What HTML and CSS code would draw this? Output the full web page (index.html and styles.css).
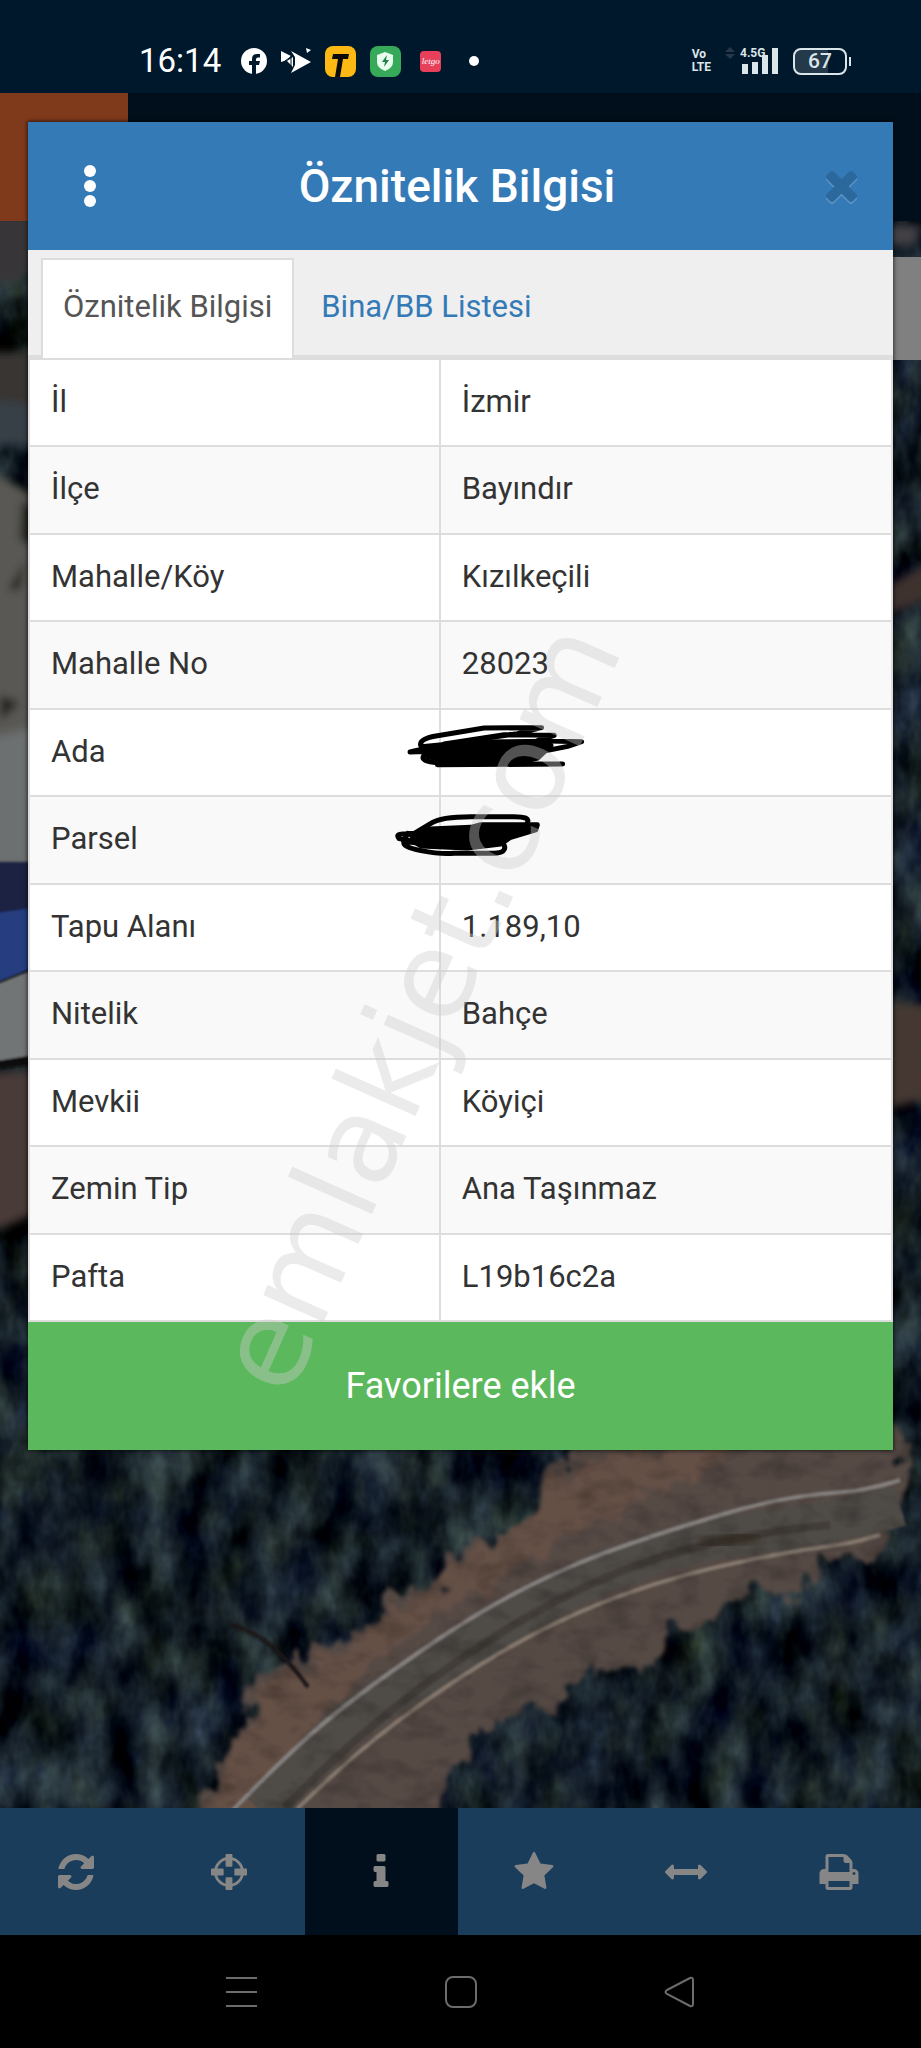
FILE: index.html
```html
<!DOCTYPE html>
<html lang="tr">
<head>
  <meta charset="UTF-8">
  <meta name="viewport" content="width=device-width, initial-scale=1.0">
  <title>Öznitelik Bilgisi</title>
  <link rel="stylesheet" href="styles.css">
</head>
<body>
  <!-- Phone status bar -->
  <div class="status-bar">
    <div class="status-left">
      <span class="clock">16:14</span>
      <svg width="26" height="26" viewBox="0 0 26 26"><circle cx="13" cy="13" r="13" fill="#fff"/><path d="M11 26v-9H8v-4h3v-2q0-5 5-5h3v3.500h-2q-2 0-2 2V13h4l-1 4h-3v9z" fill="#00182b"/></svg>
      <svg width="30" height="26" viewBox="0 0 30 26"><path d="M0 3l10 5-4 4-6 2zM10 3l20 11-20 11 4-8V9zM25 0l5 2-4 3zM6 13l6-4v10z" fill="#fff"/><path d="M10 8v11M4 13l7-5" stroke="#00182b" stroke-width="1"/></svg>
      <svg width="31" height="31" viewBox="0 0 31 31"><rect width="31" height="31" rx="8" fill="#fdb913"/><path d="M8 8h16l-1 5h-5l-3 18h-5l3-18H7z" fill="#0b0b0b"/></svg>
      <svg width="31" height="31" viewBox="0 0 31 31"><rect width="31" height="31" rx="8" fill="#37aa5a"/><path d="M15 6l8 3v7q0 6-8 9-8-3-8-9V9z" fill="#e8fff0"/><path d="M17 9l-5 7h3l-1 5 5-7h-3z" fill="#23804a"/></svg>
      <span class="letgo">letgo</span>
      <span class="dot"></span>
    </div>
    <div class="status-right">
      <span class="volte">Vo<br>LTE</span>
      <svg class="data-arrows" width="10" height="12" viewBox="0 0 10 12"><path d="M0 5l5-5 5 5zM0 7h10l-5 5z" fill="#26384a"/></svg>
      <span class="signal">
        <span class="network">4.5G</span>
        <svg width="38" height="26" viewBox="0 0 38 26"><path d="M1 16h6v10H1zM11 14h6v12h-6zM21 7h6v19h-6zM31 0h6v26h-6z" fill="#dbe6ea"/></svg>
      </span>
      <span class="battery">67</span>
    </div>
  </div>

  <header class="app-header"><div class="app-logo"></div></header>

  <main class="map">
    <svg class="map-image" viewBox="0 221 921 1587" preserveAspectRatio="xMidYMid slice">
      <defs>
        <filter id="forest" x="0" y="0" width="100%" height="100%" color-interpolation-filters="sRGB">
          <feTurbulence type="fractalNoise" baseFrequency="0.028 0.016" numOctaves="4" seed="8"/>
          <feColorMatrix values="0.420 0.080 0 0 -0.170  0.500 0.080 0 0 -0.170  0.460 0 0.120 0 -0.140  0 0 0 0 1"/>
        </filter>
        <filter id="ground" x="0" y="0" width="100%" height="100%" color-interpolation-filters="sRGB">
          <feTurbulence type="fractalNoise" baseFrequency="0.030 0.050" numOctaves="3" seed="3"/>
          <feColorMatrix values="0 0 0 0 0  0 0 0 0 0  0 0 0 0 0  1.600 0 0 0 -0.700"/>
        </filter>
        <filter id="rough" color-interpolation-filters="sRGB">
          <feTurbulence type="fractalNoise" baseFrequency="0.050 0.030" numOctaves="3" seed="5" result="n"/>
          <feDisplacementMap in="SourceGraphic" in2="n" scale="44" xChannelSelector="R" yChannelSelector="G"/>
          <feGaussianBlur stdDeviation="2"/>
        </filter>
        <filter id="soft"><feGaussianBlur stdDeviation="1"/></filter>
        <filter id="softer"><feGaussianBlur stdDeviation="4"/></filter>
      </defs>
      <rect y="221" width="921" height="1587" filter="url(#forest)"/>

      <!-- left edge: rocks, car and path -->
      <g filter="url(#softer)">
        <path d="M-10 215h50v45l-22 20-28 5z" fill="#383637"/>
        <path d="M-10 352h50v90h-50z" fill="#373533"/>
        <path d="M-10 400l50 5v40h-50z" fill="#374146"/>
        <path d="M-10 470l50 30v380h-50z" fill="#5a5954"/>
        <path d="M22 500l18 10v40l-20-10zM0 695l20 8-20 18zM8 590l18-30-6 30z" fill="#24211b"/>
        <path d="M-10 738l50-12v140h-50z" fill="#6c6f6f"/>
        <path d="M-10 1072h50v140l-50 20z" fill="#493a39"/>
      </g>
      <g filter="url(#soft)">
        <path d="M-10 862h50v56h-50z" fill="#1d2442"/>
        <path d="M-10 914l50-7v58l-50 20z" fill="#263d80"/>
        <path d="M-10 987l50-20v88l-50 8z" fill="#727476"/>
        <path d="M-10 1062l50-8v10l-50 6z" fill="#0a0a0c"/>
      </g>
      <!-- right edge -->
      <g filter="url(#softer)">
        <path d="M880 225h41l-6 20h-35z" fill="#424044"/>
        <path d="M880 590l50-28v36l-50 20z" fill="#3c302e"/>
        <path d="M880 1000l50 6v92l-50 12z" fill="#443731"/>
      </g>

      <!-- verge and road -->
      <g filter="url(#rough)">
        <path d="M185 1820l55-90 15-50 65-35 55-20 10-30 65-15 10-35 55-15 30-30 25-70h330l5 60-15 60-70 10-20 40-50-10-30 30-50 10-20 40-60 0-30 35-55 15-40 20-20 50-15 80z" fill="#564a45"/>
        <path d="M200 1820l55-120 130-80 150-110 70-60h140l-190 90-180 120-130 170z" fill="#655046"/>
      </g>
      <g filter="url(#soft)" fill="none">
        <path d="M263 1812Q330 1733 385 1698T540 1605T740 1535T900 1505" stroke="#504b47" stroke-width="43"/>
        <path d="M285 1808Q360 1729 455 1663T635 1566T830 1525" stroke="#423d39" stroke-width="8"/>
        <path d="M233 1810C300 1740 340 1705 440 1638S620 1545 720 1515S840 1500 900 1480" stroke="#85817f" stroke-width="4"/>
        <path d="M296 1810C350 1757 400 1715 480 1665S640 1583 740 1562S830 1550 880 1535" stroke="#85796e" stroke-width="4"/>
        <path d="M230 1625q40 8 78 62" stroke="#1d1718" stroke-width="4"/>
      </g>
      <path d="M700 1545l60-10" stroke="#302924" stroke-width="10" filter="url(#softer)"/>
      <rect x="0" y="1440" width="921" height="370" filter="url(#ground)" opacity="0.300"/>
    </svg>
    <div class="map-control"></div>
  </main>

  <nav class="toolbar">
    <button type="button" aria-label="Yenile"><svg viewBox="0 0 1792 1792"><path d="M1639 1056q0 5-1 7-64 268-268 434.500t-478 166.500q-146 0-282.500-55t-243.500-157l-129 129q-19 19-45 19t-45-19-19-45v-448q0-26 19-45t45-19h448q26 0 45 19t19 45-19 45l-137 137q71 66 161 102t187 36q134 0 250-65t186-179q11-17 53-117 8-23 30-23h192q13 0 22.500 9.500t9.500 22.500zm25-800v448q0 26-19 45t-45 19h-448q-26 0-45-19t-19-45 19-45l138-138q-148-137-349-137-134 0-250 65t-186 179q-11 17-53 117-8 23-30 23h-199q-13 0-22.500-9.500t-9.500-22.500v-7q65-268 270-434.500t480-166.500q146 0 284 55.500t245 156.500l130-129q19-19 45-19t45 19 19 45z"/></svg></button>
    <button type="button" aria-label="Konum"><svg viewBox="0 0 1792 1792"><circle cx="896" cy="896" r="580" fill="none" stroke="#868686" stroke-width="120"/><path d="M790 128h212q40 0 40 40v460q0 40-40 40H790q-40 0-40-40V168q0-40 40-40zM790 1124h212q40 0 40 40v460q0 40-40 40H790q-40 0-40-40v-460q0-40 40-40zM168 750h460q40 0 40 40v212q0 40-40 40H168q-40 0-40-40V790q0-40 40-40zM1164 750h460q40 0 40 40v212q0 40-40 40h-460q-40 0-40-40V790q0-40 40-40z"/></svg></button>
    <button type="button" class="active" aria-label="Bilgi"><svg viewBox="0 0 1792 1792"><path d="M1216 1344v128q0 26-19 45t-45 19h-512q-26 0-45-19t-19-45v-128q0-26 19-45t45-19h64v-384h-64q-26 0-45-19t-19-45v-128q0-26 19-45t45-19h384q26 0 45 19t19 45v576h64q26 0 45 19t19 45zm-128-1152v192q0 26-19 45t-45 19h-256q-26 0-45-19t-19-45v-192q0-26 19-45t45-19h256q26 0 45 19t19 45z"/></svg></button>
    <button type="button" aria-label="Favoriler"><svg viewBox="0 0 1792 1792"><path d="M1728 647q0 22-26 48l-363 354 86 500q1 7 1 20 0 21-10.500 35.500t-30.500 14.500q-19 0-40-12l-449-236-449 236q-22 12-40 12-21 0-31.500-14.500t-10.500-35.500q0-6 2-20l86-500-364-354q-25-27-25-48 0-37 56-46l502-73 225-455q19-41 49-41t49 41l225 455 502 73q56 9 56 46z"/></svg></button>
    <button type="button" aria-label="Ölçüm"><svg viewBox="0 0 1792 1792"><path d="M1792 896q0 26-19 45l-256 256q-19 19-45 19t-45-19-19-45v-128h-1024v128q0 26-19 45t-45 19-45-19l-256-256q-19-19-19-45t19-45l256-256q19-19 45-19t45 19 19 45v128h1024v-128q0-26 19-45t45-19 45 19l256 256q19 19 19 45z"/></svg></button>
    <button type="button" aria-label="Yazdır"><svg viewBox="0 0 1792 1792"><path d="M448 1536h896v-256h-896v256zm0-640h896v-384h-160q-40 0-68-28t-28-68v-160h-640v640zm1152 64q0-26-19-45t-45-19-45 19-19 45 19 45 45 19 45-19 19-45zm128 0v416q0 13-9.500 22.500t-22.500 9.500h-224v160q0 40-28 68t-68 28h-960q-40 0-68-28t-28-68v-160h-224q-13 0-22.500-9.500t-9.500-22.500v-416q0-79 56.500-135.500t135.500-56.500h64v-544q0-40 28-68t68-28h672q40 0 88 20t76 48l152 152q28 28 48 76t20 88v256h64q79 0 135.500 56.500t56.500 135.500z"/></svg></button>
  </nav>

  <nav class="phone-nav">
    <button type="button" aria-label="Son uygulamalar"><svg viewBox="0 0 32 32"><path d="M1 2h31M1 16h31M1 30h31"/></svg></button>
    <button type="button" aria-label="Ana ekran"><svg viewBox="0 0 32 32"><rect x="1" y="1" width="30" height="30" rx="7"/></svg></button>
    <button type="button" aria-label="Geri"><svg viewBox="0 0 32 32"><path d="M3 14L26 2q3-1 3 2v24q0 3-3 2L3 18q-3-2 0-4z"/></svg></button>
  </nav>

  <!-- Attribute dialog -->
  <div class="modal">
    <div class="modal-header">
      <button type="button" class="menu" aria-label="Menü"><svg width="12" height="44" viewBox="0 0 12 44"><circle cx="6" cy="7" r="6"/><circle cx="6" cy="22" r="6"/><circle cx="6" cy="37" r="6"/></svg></button>
      <h1>Öznitelik Bilgisi</h1>
      <button type="button" class="close" aria-label="Kapat"><svg width="47" height="47" viewBox="0 64 1792 1792"><path d="M1490 1322q0 40-28 68l-136 136q-28 28-68 28t-68-28l-294-294-294 294q-28 28-68 28t-68-28l-136-136q-28-28-28-68t28-68l294-294-294-294q-28-28-28-68t28-68l136-136q28-28 68-28t68 28l294 294 294-294q28-28 68-28t68 28l136 136q28 28 28 68t-28 68l-294 294 294 294q28 28 28 68z"/></svg></button>
    </div>
    <div class="tabs">
      <a href="#oznitelik" class="tab active">Öznitelik Bilgisi</a>
      <a href="#bina" class="tab">Bina/BB Listesi</a>
    </div>
    <table class="info" id="oznitelik">
      <tr><td>İl</td><td>İzmir</td></tr>
      <tr><td>İlçe</td><td>Bayındır</td></tr>
      <tr><td>Mahalle/Köy</td><td>Kızılkeçili</td></tr>
      <tr><td>Mahalle No</td><td>28023</td></tr>
      <tr>
        <td>Ada</td>
        <td><svg class="scribble ada" viewBox="100 50 560 170"><path d="M160 135L300 122L530 120L540 132L500 170L440 185L240 186L170 165z" fill="#000"/><path d="M150 132Q145 112 200 103T340 80L512 79L440 97L220 128L400 100L550 102L500 118L632 121L590 135L505 152L160 150L118 152L170 140M158 165Q150 180 200 184T240 188L575 188L200 190"/></svg></td>
      </tr>
      <tr>
        <td>Parsel</td>
        <td><svg class="scribble parsel" viewBox="60 330 460 150"><path d="M160 388L300 382L330 374L500 374L495 390L420 412L390 432L290 444L150 438L120 420z" fill="#000"/><path d="M100 425Q90 440 150 452T250 460H370Q410 458 400 435M110 420L84 416Q72 400 100 402L130 400L180 370Q210 350 300 350H430Q480 350 470 368M140 415L110 400L98 425L150 430"/></svg></td>
      </tr>
      <tr><td>Tapu Alanı</td><td>1.189,10</td></tr>
      <tr><td>Nitelik</td><td>Bahçe</td></tr>
      <tr><td>Mevkii</td><td>Köyiçi</td></tr>
      <tr><td>Zemin Tip</td><td>Ana Taşınmaz</td></tr>
      <tr><td>Pafta</td><td>L19b16c2a</td></tr>
    </table>
    <button type="button" class="favorite">Favorilere ekle</button>
  </div>

  <div class="watermark"><span>emlakjet.com</span></div>
</body>
</html>
```
FILE: styles.css
```css
* {
  padding: 0;
  margin: 0;
  box-sizing: border-box;
}

body {
  position: relative;
  min-height: 100vh;
  display: flex;
  flex-direction: column;
  background-color: #000;
  font-family: Roboto, "Noto Sans", sans-serif;
  overflow-x: hidden;
}

button {
  border: none;
  background: transparent;
  font-family: inherit;
  cursor: pointer;
}

svg {
  display: block;
}

/* status bar */
.status-bar {
  height: 93px;
  padding: 30px 74px 0 139px;
  display: flex;
  justify-content: space-between;
  background-color: #00182b;
  color: #fff;
}

.status-left,
.status-right {
  height: 62px;
  display: flex;
  align-items: center;
}

.status-left {
  gap: 14px;
}

.status-right {
  gap: 14px;
  color: #dbe6ea;
}

.clock {
  font-size: 33px;
  line-height: 40px;
  margin-right: 6px;
}

.letgo {
  width: 21px;
  height: 21px;
  margin: 0 14px 0 5px;
  border-radius: 4px;
  background-color: #e8405a;
  font-family: "Liberation Serif", serif;
  font-size: 9px;
  font-style: italic;
  line-height: 20px;
  text-align: center;
}

.dot {
  width: 10px;
  height: 10px;
  border-radius: 50%;
  background-color: #fff;
}

.volte {
  font-size: 12px;
  font-weight: bold;
  line-height: 13px;
}

.data-arrows {
  margin: 0 -8px 16px 0;
}

.signal {
  position: relative;
}

.network {
  position: absolute;
  left: -1px;
  top: -1px;
  font-size: 12px;
  font-weight: bold;
  line-height: 13px;
}

.battery {
  position: relative;
  width: 54px;
  height: 27px;
  border: 2px solid #dbe6ea;
  border-radius: 8px;
  background: linear-gradient(to right, #24394a 67%, transparent 67%);
  font-size: 21px;
  font-weight: 500;
  line-height: 23px;
  text-align: center;
}

.battery::after {
  content: "";
  position: absolute;
  right: -6px;
  top: 7px;
  width: 2px;
  height: 9px;
  background-color: #dbe6ea;
}

/* page behind the dialog */
.app-header {
  height: 128px;
  background-color: #000f1b;
}

.app-logo {
  width: 128px;
  height: 128px;
  background-color: #7f3a1c;
}

.map {
  position: relative;
  flex: 1;
  overflow: hidden;
  background-color: #0d171e;
}

.map-image {
  position: absolute;
  width: 100%;
  height: 100%;
}

.map-control {
  position: absolute;
  right: 0;
  top: 36px;
  width: 60px;
  height: 103px;
  background-color: #808080;
}

.toolbar {
  height: 127px;
  padding-right: 6px;
  display: flex;
  background-color: #1b3d5c;
}

.toolbar button {
  flex: 1;
  display: flex;
  align-items: center;
  justify-content: center;
}

.toolbar .active {
  background-color: #000f1b;
}

.toolbar svg {
  width: 42px;
  height: 42px;
  fill: #868686;
}

.phone-nav {
  height: 113px;
  padding: 0 131px;
  display: flex;
  background-color: #000;
}

.phone-nav button {
  flex: 1;
  display: flex;
  align-items: center;
  justify-content: center;
}

.phone-nav svg {
  width: 32px;
  height: 32px;
  fill: none;
  stroke: #6c6c6c;
  stroke-width: 2;
}

/* dialog */
.modal {
  position: absolute;
  left: 28px;
  right: 28px;
  top: 122px;
  background-color: #fff;
  box-shadow: 0 0 4px 1px rgba(0, 0, 0, 0.6);
}

.modal-header {
  height: 128px;
  padding: 0 28px 0 56px;
  display: flex;
  align-items: center;
  justify-content: space-between;
  background-color: #337ab7;
}

.modal-header h1 {
  color: #fff;
  font-size: 46px;
  font-weight: 500;
  line-height: 60px;
}

.menu svg {
  fill: #fff;
}

.close svg {
  fill: #2b689c;
  filter: drop-shadow(0 2px 0 #5c95c5);
}

.tabs {
  height: 108px;
  padding: 8px 13px 0;
  display: flex;
  gap: 5px;
  background-color: #efefef;
  border-bottom: 3px solid #ddd;
}

.tab {
  height: 100px;
  padding: 0 20px;
  border: 2px solid transparent;
  border-bottom: none;
  color: #337ab7;
  font-size: 31px;
  line-height: 94px;
  text-decoration: none;
}

.tab.active {
  background-color: #fff;
  border-color: #ddd;
  color: #555;
}

.info {
  width: 100%;
  table-layout: fixed;
  border-collapse: collapse;
  border: 2px solid #ddd;
}

.info td {
  position: relative;
  height: 87px;
  padding: 0 21px 2px;
  border: 2px solid #ddd;
  color: #333;
  font-size: 31px;
  line-height: 40px;
}

.info td:first-child {
  width: 47.6%;
}

.info tr:nth-child(even) td {
  height: 88px;
  background-color: #f9f9f9;
}

/* pen strokes over the parcel numbers */
.scribble {
  position: absolute;
  fill: none;
  stroke: #000;
  stroke-width: 15;
  stroke-linecap: round;
  stroke-linejoin: round;
}

.ada {
  left: -37px;
  top: 8px;
  width: 187px;
}

.parsel {
  left: -50px;
  top: 13px;
  width: 153px;
}

.favorite {
  display: block;
  width: 100%;
  height: 128px;
  background-color: #5cb85c;
  color: #fff;
  font-size: 36px;
}

.watermark {
  position: absolute;
  inset: 0;
  padding: 0 84px 34px 0;
  display: flex;
  align-items: center;
  justify-content: center;
  overflow: hidden;
  pointer-events: none;
}

.watermark span {
  color: rgba(205, 205, 205, 0.4);
  font-family: "DejaVu Sans", sans-serif;
  font-size: 121px;
  line-height: 1;
  transform: rotate(-66deg);
}
```
